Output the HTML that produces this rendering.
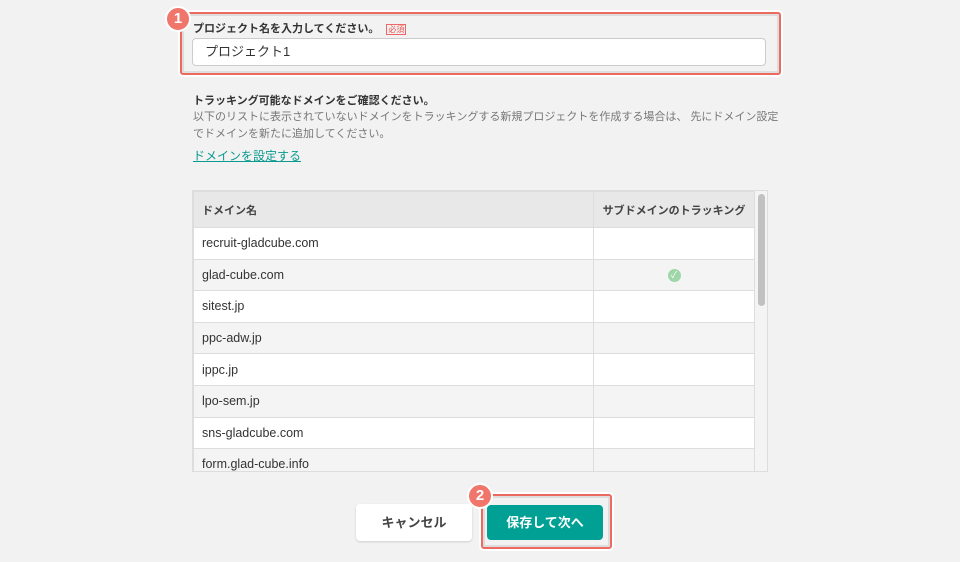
<!DOCTYPE html>
<html><head><meta charset="utf-8"><style>
*{box-sizing:border-box;margin:0;padding:0}
body{width:960px;height:562px;background:#f2f2f2;font-family:"Liberation Sans","Noto Sans CJK JP",sans-serif;position:relative;overflow:hidden;color:#333}
.abs{position:absolute}
.hl{position:absolute;border:2px solid #ec6a60;box-shadow:0 0 0 2px #fff,inset 0 0 0 2px #ddd;border-radius:3px}
.badge{position:absolute;width:26px;height:26px;border-radius:50%;background:#f0756a;border:2px solid #fff;color:#fff;font-weight:bold;font-size:15px;text-align:center;line-height:22px}
table{border-collapse:collapse;font-size:12.5px}
td,th{border:1px solid #ddd;height:31.6px;padding:0 8px;text-align:left}
th{background:#e8e8e8;font-size:11px;font-weight:bold;height:36px;color:#444}
tr.g td{background:#f4f4f4}
td{background:#fff}
</style></head><body>
<div class="hl" style="left:180px;top:12px;width:601px;height:63px"></div>
<div class="badge" style="left:165px;top:6px">1</div>
<div class="abs" style="left:193px;top:20px;font-size:11px;font-weight:bold;color:#333">プロジェクト名を入力してください。 <span style="border:1px solid #e66;color:#e55;font-size:8px;padding:0 1px;margin-left:4px;font-weight:normal">必須</span></div>
<div class="abs" style="left:192px;top:38px;width:574px;height:28px;background:#fff;border:1px solid #ccc;border-radius:4px;font-size:13px;line-height:26px;padding-left:12px">プロジェクト1</div>
<div class="abs" style="left:193px;top:92px;font-size:11px;font-weight:bold">トラッキング可能なドメインをご確認ください。</div>
<div class="abs" style="left:193px;top:109px;font-size:11px;color:#777;line-height:17px;width:590px">以下のリストに表示されていないドメインをトラッキングする新規プロジェクトを作成する場合は、 先にドメイン設定でドメインを新たに追加してください。</div>
<div class="abs" style="left:193px;top:147px;font-size:12px;color:#0a9a8e;text-decoration:underline">ドメインを設定する</div>
<div class="abs" style="left:192px;top:190px;width:576px;height:282px;overflow:hidden;background:#fff;border:1px solid #ddd">
<table style="width:562px">
<tr><th style="width:400px">ドメイン名</th><th style="text-align:center">サブドメインのトラッキング</th></tr>
<tr><td>recruit-gladcube.com</td><td></td></tr>
<tr class="g"><td>glad-cube.com</td><td style="text-align:center"><span style="display:inline-block;width:13px;height:13px;border-radius:50%;background:#9fd6a8;color:#fff;font-size:9px;line-height:13px;text-align:center">✓</span></td></tr>
<tr><td>sitest.jp</td><td></td></tr>
<tr class="g"><td>ppc-adw.jp</td><td></td></tr>
<tr><td>ippc.jp</td><td></td></tr>
<tr class="g"><td>lpo-sem.jp</td><td></td></tr>
<tr><td>sns-gladcube.com</td><td></td></tr>
<tr class="g"><td>form.glad-cube.info</td><td></td></tr>
</table>
<div class="abs" style="left:562px;top:0;width:14px;height:282px;background:#f4f4f4"></div>
<div class="abs" style="left:565px;top:3px;width:7px;height:112px;background:#c1c1c1;border-radius:4px"></div>
</div>
<div class="abs" style="left:356px;top:504px;width:116px;height:37px;background:#fff;border-radius:4px;box-shadow:0 1px 2px rgba(0,0,0,.15);font-size:13px;font-weight:bold;text-align:center;line-height:37px;color:#444">キャンセル</div>
<div class="hl" style="left:481px;top:494px;width:131px;height:55px"></div>
<div class="abs" style="left:487px;top:505px;width:116px;height:35px;background:#00a095;border-radius:4px;font-size:13px;font-weight:bold;text-align:center;line-height:35px;color:#fff">保存して次へ</div>
<div class="badge" style="left:467px;top:483px">2</div>
</body></html>
